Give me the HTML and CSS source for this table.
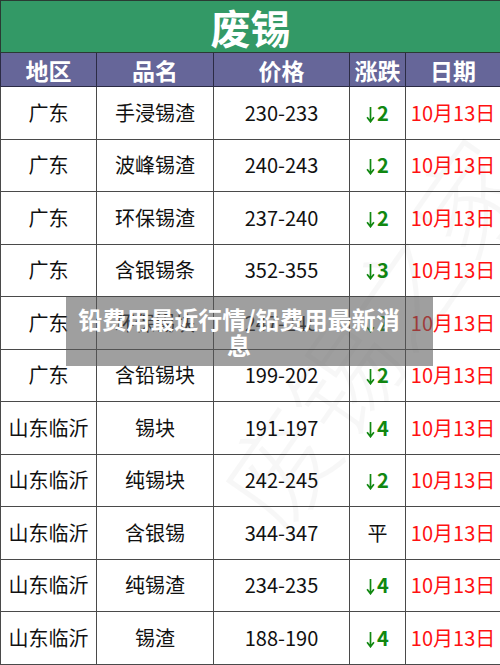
FILE: index.html
```html
<!DOCTYPE html>
<html lang="zh-CN">
<head>
<meta charset="utf-8">
<title>废锡</title>
<link rel="stylesheet" href="styles.css">
</head>
<body>
<div class="page">
  <table class="sheet">
    <colgroup>
      <col class="c1"><col class="c2"><col class="c3"><col class="c4"><col class="c5">
    </colgroup>
    <thead>
      <tr class="title-row"><th colspan="5">废锡</th></tr>
      <tr class="head-row"><th>地区</th><th>品名</th><th>价格</th><th>涨跌</th><th>日期</th></tr>
    </thead>
    <tbody>
      <tr><td>广东</td><td>手浸锡渣</td><td>230-233</td><td class="chg"><svg class="arr" viewBox="0 0 8 16"><path d="M4 1V14.5M0.8 10.5L4 14.8L7.2 10.5"/></svg>2</td><td class="date">10月13日</td></tr>
      <tr><td>广东</td><td>波峰锡渣</td><td>240-243</td><td class="chg"><svg class="arr" viewBox="0 0 8 16"><path d="M4 1V14.5M0.8 10.5L4 14.8L7.2 10.5"/></svg>2</td><td class="date">10月13日</td></tr>
      <tr><td>广东</td><td>环保锡渣</td><td>237-240</td><td class="chg"><svg class="arr" viewBox="0 0 8 16"><path d="M4 1V14.5M0.8 10.5L4 14.8L7.2 10.5"/></svg>2</td><td class="date">10月13日</td></tr>
      <tr><td>广东</td><td>含银锡条</td><td>352-355</td><td class="chg"><svg class="arr" viewBox="0 0 8 16"><path d="M4 1V14.5M0.8 10.5L4 14.8L7.2 10.5"/></svg>3</td><td class="date">10月13日</td></tr>
      <tr><td>广东</td><td>环保锡块</td><td>247-248</td><td class="chg"><svg class="arr" viewBox="0 0 8 16"><path d="M4 1V14.5M0.8 10.5L4 14.8L7.2 10.5"/></svg>2</td><td class="date">10月13日</td></tr>
      <tr><td>广东</td><td>含铅锡块</td><td>199-202</td><td class="chg"><svg class="arr" viewBox="0 0 8 16"><path d="M4 1V14.5M0.8 10.5L4 14.8L7.2 10.5"/></svg>2</td><td class="date">10月13日</td></tr>
      <tr><td>山东临沂</td><td>锡块</td><td>191-197</td><td class="chg"><svg class="arr" viewBox="0 0 8 16"><path d="M4 1V14.5M0.8 10.5L4 14.8L7.2 10.5"/></svg>4</td><td class="date">10月13日</td></tr>
      <tr><td>山东临沂</td><td>纯锡块</td><td>242-245</td><td class="chg"><svg class="arr" viewBox="0 0 8 16"><path d="M4 1V14.5M0.8 10.5L4 14.8L7.2 10.5"/></svg>2</td><td class="date">10月13日</td></tr>
      <tr><td>山东临沂</td><td>含银锡</td><td>344-347</td><td class="flat">平</td><td class="date">10月13日</td></tr>
      <tr><td>山东临沂</td><td>纯锡渣</td><td>234-235</td><td class="chg"><svg class="arr" viewBox="0 0 8 16"><path d="M4 1V14.5M0.8 10.5L4 14.8L7.2 10.5"/></svg>4</td><td class="date">10月13日</td></tr>
      <tr><td>山东临沂</td><td>锡渣</td><td>188-190</td><td class="chg"><svg class="arr" viewBox="0 0 8 16"><path d="M4 1V14.5M0.8 10.5L4 14.8L7.2 10.5"/></svg>4</td><td class="date">10月13日</td></tr>
    </tbody>
  </table>
  <div class="watermark">废锡之家</div>
  <div class="caption">铅费用最近行情/铅费用最新消息</div>
</div>
</body>
</html>
```

FILE: styles.css
```css
html, body {
  margin: 0;
  padding: 0;
  background: #ffffff;
}
.page {
  position: relative;
  width: 500px;
  height: 665px;
  overflow: hidden;
  font-family: "Noto Sans CJK SC", "Noto Sans", sans-serif;
}
.sheet {
  width: 500px;
  border-collapse: collapse;
  table-layout: fixed;
}
.c1 { width: 96px; }
.c2 { width: 117px; }
.c3 { width: 136px; }
.c4 { width: 56px; }
.c5 { width: 95px; }

.sheet th, .sheet td {
  border: 1px solid #4a4a4a;
  padding: 0;
  text-align: center;
  vertical-align: middle;
  white-space: nowrap;
}
.title-row th {
  height: 51px;
  background: #339966;
  color: #ffffff;
  font-size: 40px;
  font-weight: 700;
  line-height: 48px;
  border-color: #2a3a33;
}
.head-row th {
  height: 33px;
  background: #666699;
  color: #ffffff;
  font-size: 23px;
  font-weight: 700;
  line-height: 30px;
  border-color: #2b2b44;
}
.sheet td {
  height: 51.5px;
  font-size: 20px;
  color: #111111;
  line-height: 24px;
}
.sheet td.chg {
  color: #118811;
  font-weight: 700;
}
.arr {
  width: 9px;
  height: 17px;
  margin-right: 2px;
  vertical-align: -2px;
}
.arr path {
  fill: none;
  stroke: #118811;
  stroke-width: 1.6;
}
.sheet td.flat {
  color: #111111;
}
.sheet td.date {
  color: #ff1111;
}
.watermark {
  position: absolute;
  left: 150px;
  top: 250px;
  font-size: 110px;
  font-weight: 300;
  color: rgba(0, 0, 0, 0.03);
  transform: rotate(-55deg);
  transform-origin: center;
  white-space: nowrap;
  pointer-events: none;
}
.caption {
  position: absolute;
  left: 66px;
  top: 297px;
  width: 326px;
  padding: 9px 31px 8px 10px;
  background: rgba(90, 90, 90, 0.58);
  color: #ffffff;
  font-size: 24px;
  font-weight: 700;
  line-height: 26px;
  text-align: center;
}
```
